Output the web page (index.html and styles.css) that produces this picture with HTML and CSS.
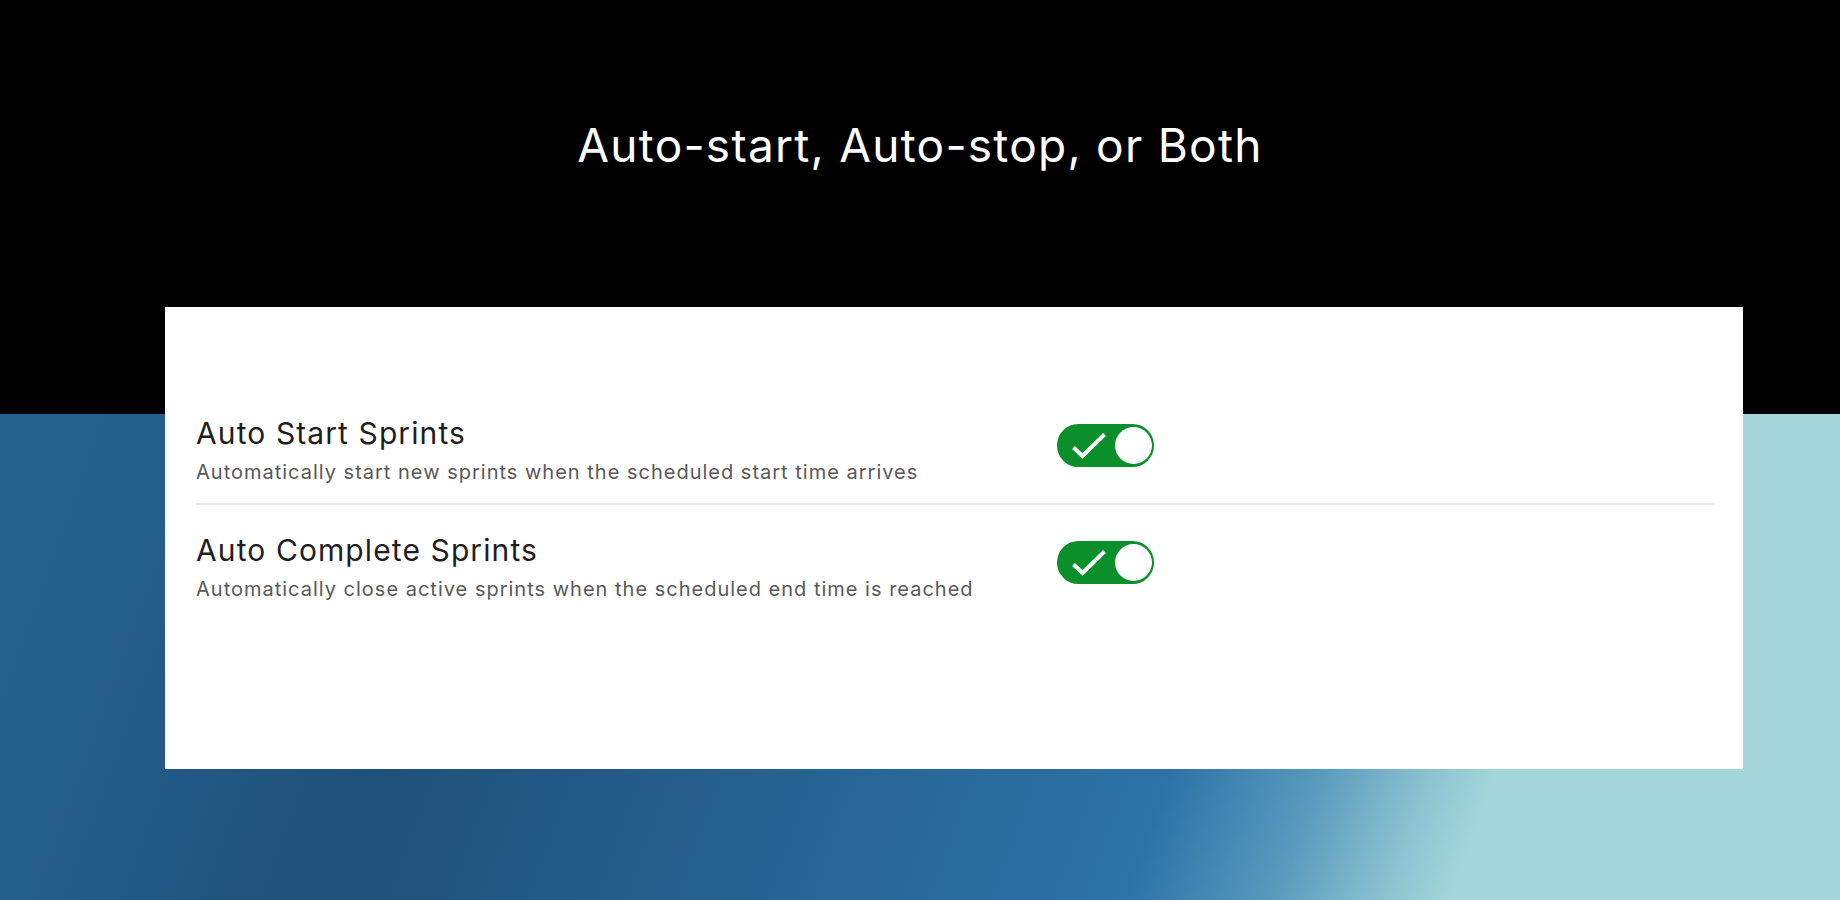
FILE: index.html
```html
<!DOCTYPE html>
<html>
<head>
    <meta name="viewport" content="width=device-width, initial-scale=1">
    <link rel="stylesheet" href="styles.css">
</head>
<body>
    <header class="hero">
        <h1>Auto-start, Auto-stop, or Both</h1>
    </header>

    <section class="settings-card">
        <div class="setting-row">
            <div class="setting-text">
                <div class="setting-title">Auto Start Sprints</div>
                <div class="setting-desc">Automatically start new sprints when the scheduled start time arrives</div>
            </div>
            <div class="switch">
                <svg viewBox="0 0 34 26" width="34" height="26"><path d="M1.5 14.5 L10.5 23 L32.5 1.5" /></svg>
                <span class="knob"></span>
            </div>
        </div>
        <div class="setting-row">
            <div class="setting-text">
                <div class="setting-title">Auto Complete Sprints</div>
                <div class="setting-desc">Automatically close active sprints when the scheduled end time is reached</div>
            </div>
            <div class="switch">
                <svg viewBox="0 0 34 26" width="34" height="26"><path d="M1.5 14.5 L10.5 23 L32.5 1.5" /></svg>
                <span class="knob"></span>
            </div>
        </div>
    </section>
</body>
</html>
```

FILE: styles.css
```css
html, body {
    margin: 0;
    height: 100%;
}

body {
    font-family: Inter, "Noto Sans", sans-serif;
    overflow: hidden;
    background:
        linear-gradient(#000 0, #000 414px, transparent 414px),
        linear-gradient(110deg, #27628f 0%, #25608d 14%, #1f5179 30%, #26618f 48%, #2d73a8 67%, #5a9bbd 74%, #8cc3d1 79%, #a3d6da 82%, #a3d6da 100%);
}

.hero {
    padding-top: 117px;
    text-align: center;
}

.hero h1 {
    margin: 0;
    color: #fff;
    font-size: 46px;
    font-weight: 400;
    line-height: 56px;
    letter-spacing: 1.25px;
}

.settings-card {
    box-sizing: border-box;
    width: 1578px;
    height: 462px;
    margin: 134px 0 0 165px;
    padding: 108px 29px 0 31px;
    background-color: #fff;
}

.setting-row {
    display: grid;
    grid-template-columns: 861px auto;
    align-items: start;
}

.setting-row:first-child {
    padding-bottom: 19px;
    border-bottom: 2px solid #e9e9e9;
}

.setting-row + .setting-row {
    padding-top: 27px;
}

.setting-title {
    font-size: 30px;
    line-height: 36px;
    letter-spacing: 1.1px;
    color: #1e1e1e;
}

.setting-desc {
    margin-top: 9px;
    font-size: 20px;
    line-height: 24px;
    letter-spacing: 1px;
    color: #595959;
}

.switch {
    box-sizing: border-box;
    width: 97px;
    height: 43px;
    margin-top: 9px;
    padding-left: 13px;
    display: flex;
    align-items: center;
    gap: 9px;
    background-color: #0b8f2b;
    border: 2px solid #0b8f2b;
    border-radius: 22px;
}

.switch svg path {
    fill: none;
    stroke: #fff;
    stroke-width: 4;
}

.knob {
    width: 37px;
    height: 37px;
    border-radius: 50%;
    background-color: #fff;
}
```
